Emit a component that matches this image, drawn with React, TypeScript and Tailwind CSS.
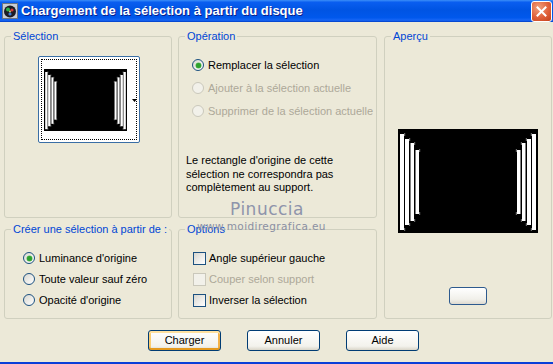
import React from "react";

function Preview({ className }: { className: string }) {
  const left = [
    { x: 2, y: 5, w: 4, h: 96 },
    { x: 7, y: 10, w: 4, h: 86 },
    { x: 12.5, y: 14, w: 3.5, h: 78 },
    { x: 17.5, y: 21, w: 3.5, h: 64 },
  ];
  return (
    <svg viewBox="0 0 140 104" preserveAspectRatio="none" className={className}>
      <rect width="140" height="104" fill="#000" />
      {left.map((b, i) => (
        <g key={i}>
          <rect x={b.x + b.w} y={b.y - 1} width={1.2} height={3} fill="#6b6b6b" />
          <rect x={b.x + b.w} y={b.y + b.h - 2} width={1.2} height={3} fill="#6b6b6b" />
          <rect x={140 - b.x - b.w - 1.2} y={b.y - 1} width={1.2} height={3} fill="#6b6b6b" />
          <rect x={140 - b.x - b.w - 1.2} y={b.y + b.h - 2} width={1.2} height={3} fill="#6b6b6b" />
          <rect x={b.x} y={b.y} width={b.w} height={b.h} fill="#fff" />
          <rect x={140 - b.x - b.w} y={b.y} width={b.w} height={b.h} fill="#fff" />
        </g>
      ))}
    </svg>
  );
}

function Group({
  title,
  className,
  children,
}: {
  title: string;
  className: string;
  children?: React.ReactNode;
}) {
  return (
    <div className={`rounded-[3px] border border-[#d0d0bf] ${className}`}>
      <div className="-mt-[7px] ml-[6px] w-fit bg-[#ece9d8] px-[2px] leading-[13px] text-[#0046d5]">
        {title}
      </div>
      {children}
    </div>
  );
}

function Radio({
  checked,
  disabled,
  label,
}: {
  checked?: boolean;
  disabled?: boolean;
  label: string;
}) {
  return (
    <div className="flex h-[16px] items-center gap-[4px]">
      <span
        className={
          disabled
            ? "flex h-[12px] w-[12px] items-center justify-center rounded-full border border-[#cac8bb] bg-[#f2f1ea]"
            : "flex h-[12px] w-[12px] items-center justify-center rounded-full border border-[#1c5180] bg-[linear-gradient(135deg,#d8d7d0,#ffffff)]"
        }
      >
        {checked && <span className="h-[5px] w-[5px] rounded-full bg-[#2ea12e] shadow-[0_0_0_0.5px_#63c063]" />}
      </span>
      <span className={disabled ? "leading-[13px] text-[#aca899]" : "leading-[13px] text-black"}>{label}</span>
    </div>
  );
}

function Check({ disabled, label }: { disabled?: boolean; label: string }) {
  return (
    <div className="flex h-[16px] items-center gap-[3px]">
      <span
        className={
          disabled
            ? "h-[13px] w-[13px] border border-[#cac8bb] bg-[#f2f1ea]"
            : "h-[13px] w-[13px] border border-[#1c5180] bg-[linear-gradient(135deg,#d8d7d0,#ffffff)]"
        }
      />
      <span className={disabled ? "leading-[13px] text-[#aca899]" : "leading-[13px] text-black"}>{label}</span>
    </div>
  );
}

function Btn({ label, def }: { label: string; def?: boolean }) {
  return (
    <button
      className={
        def
          ? "h-[21px] w-[73px] rounded-[3px] border border-[#003c74] bg-[linear-gradient(180deg,#ffffff,#f3f2ec_80%,#d9d5c8)] text-black shadow-[inset_0_2px_#ffe1a0,inset_0_-2px_#e59a1f,inset_2px_0_#fbcd72,inset_-2px_0_#f3b249]"
          : "h-[21px] w-[73px] rounded-[3px] border border-[#003c74] bg-[linear-gradient(180deg,#ffffff,#f3f2ec_80%,#d9d5c8)] text-black"
      }
    >
      {label}
    </button>
  );
}

export default function App() {
  return (
    <div className="relative flex h-[364px] w-[553px] flex-col overflow-hidden bg-[#ece9d8] font-['Liberation_Sans',Arial,sans-serif] text-[11px] text-black">
      {/* Title bar */}
      <div className="flex h-[22px] shrink-0 items-center bg-[linear-gradient(180deg,#3c8ff8_0%,#0a5ef0_10%,#0054e3_45%,#0058ec_80%,#1766f5_92%,#003dc4_100%)]">
        <svg width="16" height="16" viewBox="0 0 16 16" className="ml-[2px]">
          <rect x="0.5" y="0.5" width="15" height="15" fill="#c9cdd3" stroke="#6a7480" />
          <circle cx="8" cy="8.5" r="6" fill="#1c1c24" />
          <circle cx="6" cy="6.5" r="2" fill="#2cb04a" />
          <circle cx="10" cy="7" r="1.6" fill="#d83a3a" />
          <circle cx="8" cy="11" r="1.6" fill="#3a7ad8" />
          <circle cx="8" cy="8.5" r="0.9" fill="#e8e070" />
        </svg>
        <span className="ml-[3px] text-[13px] font-bold tracking-[0px] text-white [text-shadow:1px_1px_#0a1e8c]">
          Chargement de la sélection à partir du disque
        </span>
        <div className="ml-auto mr-[1px] flex h-[21px] w-[21px] items-center justify-center rounded-[3px] border border-white bg-[radial-gradient(circle_at_35%_30%,#f0a07e,#e0603a_55%,#c2401a)]">
          <svg width="11" height="11" viewBox="0 0 11 11">
            <path d="M1.5 1.5 L9.5 9.5 M9.5 1.5 L1.5 9.5" stroke="#fff" strokeWidth="2" strokeLinecap="square" />
          </svg>
        </div>
      </div>

      {/* Groups */}
      <div className="flex pl-[4px] pt-[14px]">
        <div className="flex w-[168px] flex-col gap-[11px]">
          <Group title="Sélection" className="h-[182px]">
            <div className="relative ml-[33px] mt-[13px] flex h-[87px] w-[102px] items-center rounded-[2px] border border-[#3a6ea5] bg-white pl-[5px]">
              <div className="pointer-events-none absolute inset-[2px] border border-dotted border-black" />
              <Preview className="h-[62px] w-[83px]" />
              <svg className="ml-[5px] mt-[1px]" width="5" height="3" viewBox="0 0 5 3">
                <polygon points="0,0 5,0 2.5,3" fill="#000" />
              </svg>
            </div>
          </Group>
          <Group title="Créer une sélection à partir de :" className="h-[90px]">
            <div className="mt-[14px] flex flex-col gap-[5px] pl-[18px]">
              <Radio checked label="Luminance d'origine" />
              <Radio label="Toute valeur sauf zéro" />
              <Radio label="Opacité d'origine" />
            </div>
          </Group>
        </div>

        <div className="ml-[6px] flex w-[199px] flex-col gap-[11px]">
          <Group title="Opération" className="h-[182px]">
            <div className="mt-[14px] flex flex-col gap-[7px] pl-[13px]">
              <Radio checked label="Remplacer la sélection" />
              <Radio disabled label="Ajouter à la sélection actuelle" />
              <Radio disabled label="Supprimer de la sélection actuelle" />
            </div>
            <p className="mt-[35px] pl-[7px] leading-[13.6px]">
              Le rectangle d'origine de cette
              <br />
              sélection ne correspondra pas
              <br />
              complètement au support.
            </p>
          </Group>
          <Group title="Options" className="h-[90px]">
            <div className="mt-[14px] flex flex-col gap-[5px] pl-[14px]">
              <Check label="Angle supérieur gauche" />
              <Check disabled label="Couper selon support" />
              <Check label="Inverser la sélection" />
            </div>
          </Group>
        </div>

        <Group title="Aperçu" className="ml-[7px] h-[283px] w-[168px]">
          <div className="flex flex-col items-center">
            <Preview className="mt-[86px] h-[104px] w-[140px]" />
            <div className="mt-[54px] h-[18px] w-[38px] rounded-[3px] border border-[#2d5a8e] bg-[linear-gradient(180deg,#ffffff,#f1f0ea_70%,#dedad0)]" />
          </div>
        </Group>
      </div>

      {/* Buttons */}
      <div className="mt-[11px] flex gap-[26px] pl-[148px]">
        <Btn def label="Charger" />
        <Btn label="Annuler" />
        <Btn label="Aide" />
      </div>

      <div className="flex-1" />
      <div className="h-[2px] shrink-0 bg-[#0a3fd8]" />

      {/* Watermark overlay */}
      <div className="pointer-events-none absolute left-[230px] top-[199px] font-['DejaVu_Sans',sans-serif] text-[17px] leading-[20px] tracking-[0.5px] text-[#8e94ab]">
        Pinuccia
      </div>
      <div className="pointer-events-none absolute left-[197px] top-[220px] font-['DejaVu_Sans',sans-serif] text-[10.5px] leading-[12px] tracking-[0.4px] text-[#8b90a3]">
        www.moidiregrafica.eu
      </div>
    </div>
  );
}
